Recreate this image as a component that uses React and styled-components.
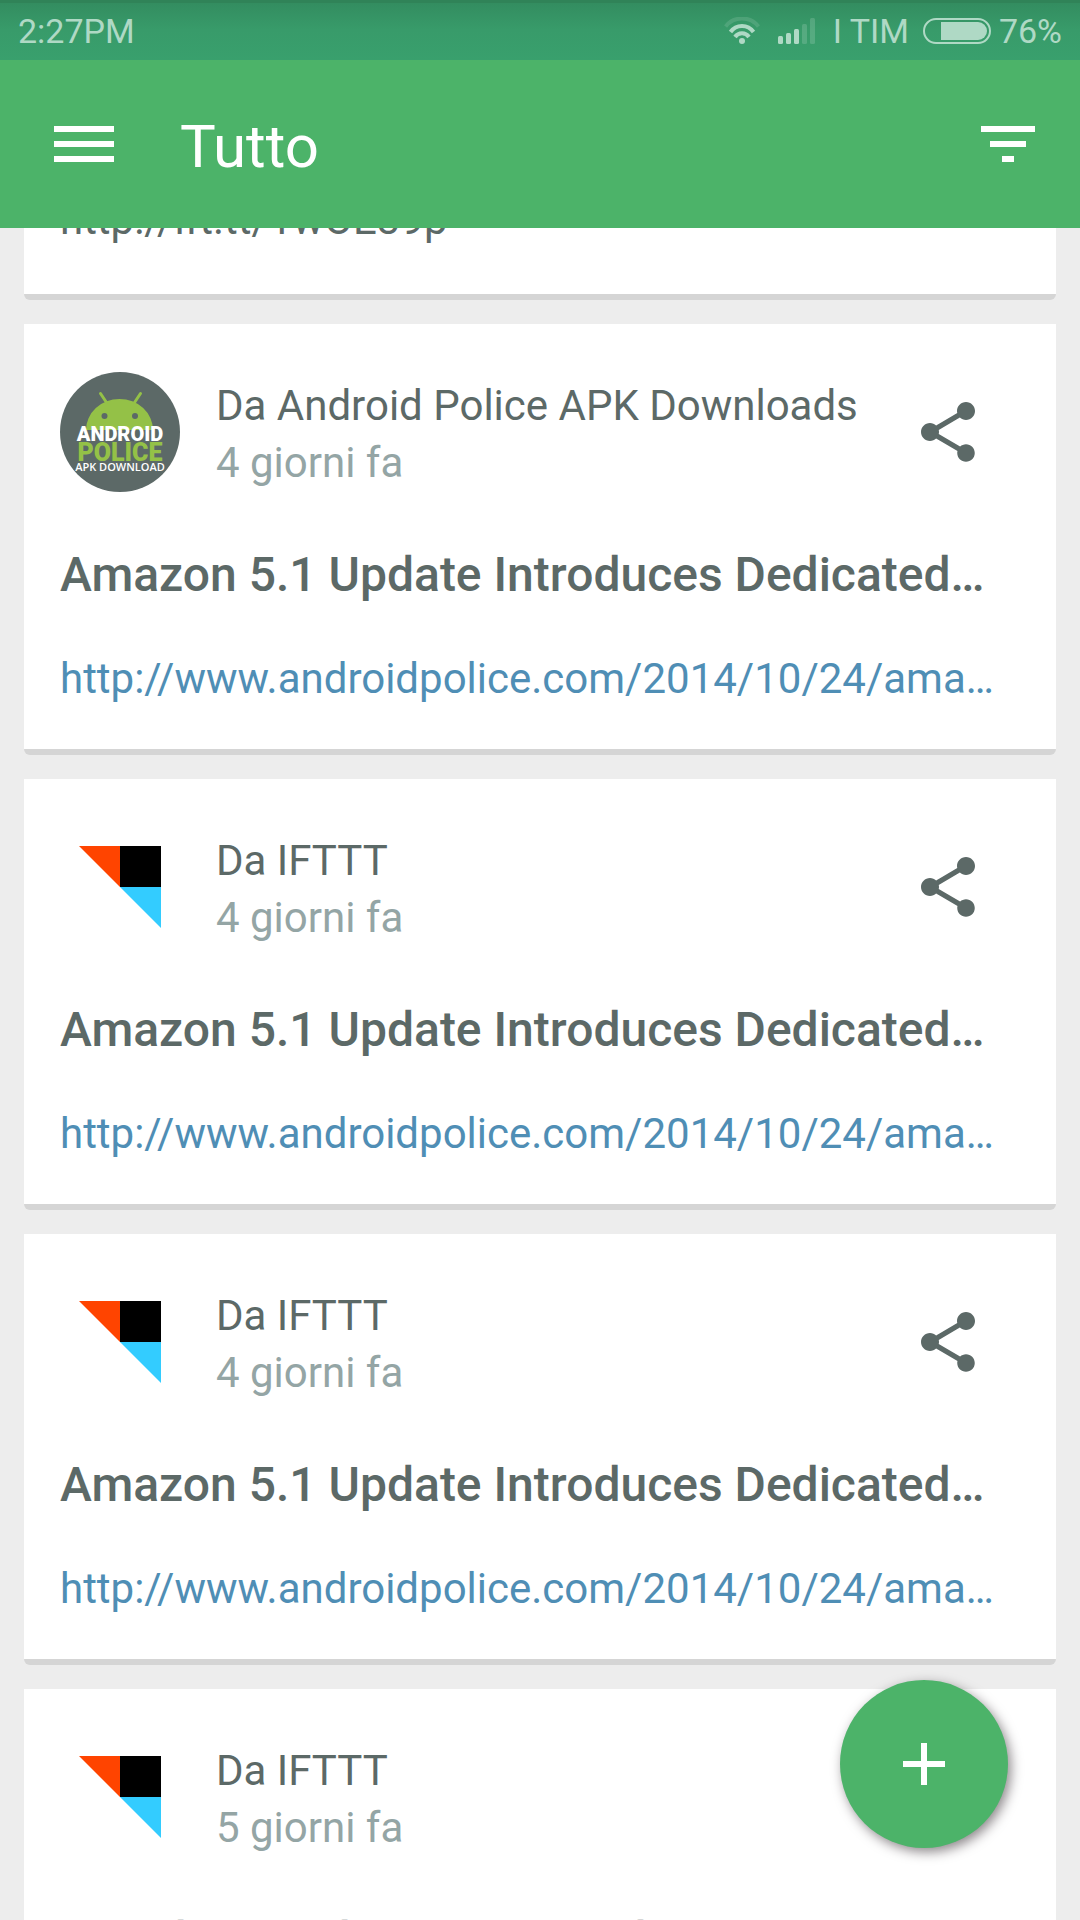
import React, { useLayoutEffect, useRef } from "react";
import styled, { createGlobalStyle } from "styled-components";
import { MdShare } from "react-icons/md";

const GlobalStyle = createGlobalStyle`
  * {
    box-sizing: border-box;
  }
  body {
    margin: 0;
    background: #ededed;
    font-family: Roboto, "Noto Sans", sans-serif;
  }
  button {
    padding: 0;
    border: none;
    background: none;
    cursor: pointer;
  }
  svg {
    display: block;
  }
`;

const Screen = styled.div`
  display: flex;
  flex-direction: column;
  height: 100vh;
`;

const StatusBar = styled.div`
  display: flex;
  flex: none;
  align-items: center;
  gap: 18px;
  height: 60px;
  padding: 2px 18px 0;
  background: linear-gradient(#308358 3px, #338d60 3px, #389b6a 30px, #39a06d);
  color: #afd9c5;
  font-size: 34px;
`;

const Clock = styled.span`
  flex: 1;
`;

const Battery = styled.span`
  display: flex;
  align-items: center;
  gap: 8px;
`;

const Carrier = styled.span`
  margin-right: -4px;
`;

const AppBar = styled.header`
  display: flex;
  flex: none;
  align-items: center;
  height: 168px;
  padding: 0 45px 0 54px;
  gap: 66px;
  background: #4cb369;
  color: #fff;
`;

const AppTitle = styled.h1`
  flex: 1;
  margin: 0;
  padding-top: 6px;
  font-size: 60px;
  font-weight: 400;
  line-height: 60px;
`;

const Feed = styled.main`
  flex: 1;
  min-height: 0;
  padding: 0 24px 24px;
  overflow-y: auto;
  scrollbar-width: none;
`;

const Card = styled.article`
  margin-bottom: 24px;
  padding: 48px 36px 42px;
  background: #fff;
  border-bottom: 6px solid #d5d5d5;
  border-radius: 0 0 6px 6px;
`;

const CardHeader = styled.div`
  display: flex;
  align-items: center;
  gap: 36px;
  margin-bottom: 55px;
  padding-right: 36px;
`;

const Sender = styled.div`
  flex: 1;
  min-width: 0;
  padding-top: 4px;
  font-size: 42px;
  line-height: 57px;
`;

const SenderName = styled.div`
  color: #5c6967;
  white-space: nowrap;
`;

const SentAt = styled.div`
  color: #94a5a5;
`;

const ShareButton = styled.button`
  color: #5c6967;
`;

const CardTitle = styled.h2`
  margin: 0 0 48px;
  overflow: hidden;
  color: #5c6967;
  font-size: 48px;
  font-weight: 500;
  line-height: 56px;
  text-overflow: ellipsis;
  white-space: nowrap;
`;

const CardText = styled.p`
  margin: 0 0 4px;
  color: #5c6967;
  font-size: 42px;
  line-height: 56px;
`;

const CardLink = styled.a`
  display: block;
  overflow: hidden;
  color: #4f8eb5;
  font-size: 42px;
  line-height: 56px;
  text-decoration: none;
  text-overflow: ellipsis;
  white-space: nowrap;
`;

const AddButton = styled.button`
  position: fixed;
  right: 72px;
  bottom: 72px;
  display: flex;
  align-items: center;
  justify-content: center;
  width: 168px;
  height: 168px;
  border-radius: 50%;
  && {
    background: #4cb369;
  }
  box-shadow: 3px 4px 12px rgba(30, 20, 25, 0.5);
`;

const WifiIcon = () => (
  <svg width="36" height="28" viewBox="0 0 36 28" fill="none" stroke="currentColor" strokeWidth="4">
    <path d="M1.5 9.5a21 21 0 0 1 33 0" opacity="0.2" />
    <path d="M6.5 15a14 14 0 0 1 23 0" />
    <path d="M11 20a8.5 8.5 0 0 1 14 0" />
    <circle cx="18" cy="24" r="3" fill="currentColor" stroke="none" />
  </svg>
);

const SignalIcon = () => (
  <svg width="37" height="26" viewBox="0 0 37 26" fill="currentColor">
    <rect x="0" y="18" width="5" height="8" rx="1.5" />
    <rect x="8" y="15" width="5" height="11" rx="1.5" />
    <rect x="16" y="11" width="5" height="15" rx="1.5" />
    <rect x="24" y="6" width="5" height="20" rx="1.5" opacity="0.25" />
    <rect x="32" y="0" width="5" height="26" rx="1.5" opacity="0.25" />
  </svg>
);

const BatteryIcon = () => (
  <svg width="68" height="26" viewBox="0 0 68 26">
    <rect x="1" y="1" width="66" height="24" rx="12" fill="none" stroke="currentColor" strokeWidth="2" />
    <path d="M18 4h37a9 9 0 0 1 0 18H18z" fill="currentColor" />
  </svg>
);

const MenuIcon = () => (
  <svg width="60" height="36" viewBox="0 0 60 36" fill="#fff">
    <path d="M0 0h60v6H0zM0 15h60v6H0zM0 30h60v6H0z" />
  </svg>
);

const FilterIcon = () => (
  <svg width="54" height="36" viewBox="0 0 54 36" fill="#fff">
    <path d="M0 0h54v6H0zM9 15h36v6H9zM21 30h12v6H21z" />
  </svg>
);

const PlusIcon = () => (
  <svg width="42" height="42" viewBox="0 0 42 42" fill="#fff">
    <path d="M18 0h6v18h18v6H24v18h-6V24H0v-6h18z" />
  </svg>
);

const PoliceLogo = () => (
  <svg width="120" height="120" viewBox="0 0 120 120" textAnchor="middle">
    <circle cx="60" cy="60" r="60" fill="#5c6967" />
    <path d="M26 58a33.5 31 0 0 1 67 0z" fill="#94c147" />
    <path d="M40.5 21.5l6 9M80.5 21.5l-6 9" stroke="#94c147" strokeWidth="3" strokeLinecap="round" />
    <circle cx="44.5" cy="44" r="3" fill="#5c6967" />
    <circle cx="75" cy="44" r="3" fill="#5c6967" />
    <text x="60" y="69" fill="#fff" fontSize="20" fontWeight="900">
      ANDROID
    </text>
    <text x="60" y="89" fill="#94c147" fontSize="25" fontWeight="900">
      POLICE
    </text>
    <text x="60" y="99" fill="#fff" fontFamily="Open Sans" fontSize="11" fontWeight="600">
      APK DOWNLOAD
    </text>
  </svg>
);

const IftttLogo = () => (
  <svg width="120" height="120" viewBox="0 0 120 120">
    <path d="M19 19h41v41z" fill="#ff4400" />
    <path d="M60 19h41v41H60z" fill="#000" />
    <path d="M60 60h41v41z" fill="#33ccff" />
  </svg>
);

const AMAZON_TITLE = "Amazon 5.1 Update Introduces Dedicated…";
const AMAZON_LINK = "http://www.androidpolice.com/2014/10/24/ama…";

const pushes = [
  { id: 1, logo: <PoliceLogo />, from: "Da Android Police APK Downloads", when: "4 giorni fa", title: AMAZON_TITLE, link: AMAZON_LINK },
  { id: 2, logo: <IftttLogo />, from: "Da IFTTT", when: "4 giorni fa", title: AMAZON_TITLE, link: AMAZON_LINK },
  { id: 3, logo: <IftttLogo />, from: "Da IFTTT", when: "4 giorni fa", title: AMAZON_TITLE, link: AMAZON_LINK },
  { id: 4, logo: <IftttLogo />, from: "Da IFTTT", when: "5 giorni fa", title: "Google Goggles 1.9.14 Update Changes…", link: AMAZON_LINK },
];

const PushCard = ({ push }) => (
  <Card>
    <CardHeader>
      {push.logo}
      <Sender>
        <SenderName>{push.from}</SenderName>
        <SentAt>{push.when}</SentAt>
      </Sender>
      <ShareButton aria-label="Condividi">
        <MdShare size={72} />
      </ShareButton>
    </CardHeader>
    <CardTitle>{push.title}</CardTitle>
    <CardLink href="#">{push.link}</CardLink>
  </Card>
);

const App = () => {
  const feed = useRef(null);

  // the feed opens with the newest note partly scrolled away
  useLayoutEffect(() => {
    feed.current.scrollTop = 84;
  }, []);

  return (
    <Screen>
      <GlobalStyle />
      <StatusBar>
        <Clock>2:27PM</Clock>
        <WifiIcon />
        <SignalIcon />
        <Carrier>I TIM</Carrier>
        <Battery>
          <BatteryIcon />
          76%
        </Battery>
      </StatusBar>
      <AppBar>
        <button aria-label="Menu">
          <MenuIcon />
        </button>
        <AppTitle>Tutto</AppTitle>
        <button aria-label="Filtra">
          <FilterIcon />
        </button>
      </AppBar>
      <Feed ref={feed}>
        <Card>
          <CardText>http://ift.tt/1wOE39p</CardText>
        </Card>
        {pushes.map((push) => (
          <PushCard key={push.id} push={push} />
        ))}
      </Feed>
      <AddButton aria-label="Aggiungi">
        <PlusIcon />
      </AddButton>
    </Screen>
  );
};

export default App;
